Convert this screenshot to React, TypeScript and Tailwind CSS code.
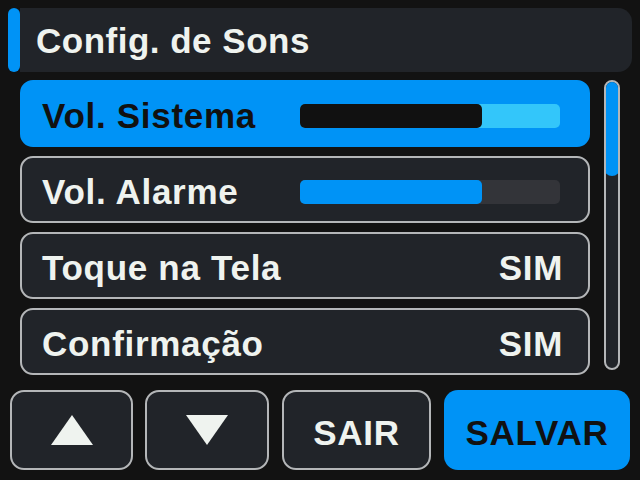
const font = { fontFamily: '"Liberation Sans", Arial, sans-serif' };

function Slider({ pct, fill, track }: { pct: number; fill: string; track: string }) {
  return (
    <div className={`w-[260px] h-[24px] rounded-[5px] overflow-hidden ${track}`}>
      <div className={`h-full rounded-r-[5px] ${fill}`} style={{ width: `${pct}%` }} />
    </div>
  );
}

function Row({ label, active, pr, children }: { label: string; active?: boolean; pr: string; children?: React.ReactNode }) {
  return (
    <div
      className={`h-[67px] rounded-[13px] flex items-center justify-between pl-[20px] pt-[4px] ${pr} ${
        active ? "bg-[#0093f6] text-[#111111] border-2 border-[#0093f6]" : "bg-[#212429] text-[#eff3ef] border-2 border-[#b4b6b8]"
      }`}
    >
      <span className="font-bold text-[35px] leading-none tracking-[0.7px]">{label}</span>
      {children}
    </div>
  );
}

export default function App() {
  return (
    <div className="w-[640px] h-[480px] bg-[#121212] flex flex-col overflow-hidden" style={font}>
      {/* header */}
      <div className="flex mx-2 mt-2 h-16">
        <div className="w-3 rounded-full bg-[#0093f6]" />
        <div className="flex-1 bg-[#212429] rounded-r-[14px] flex items-center pl-[16px]">
          <span className="font-bold text-[35px] leading-none tracking-[0.5px] text-[#eff3ef]">Config. de Sons</span>
        </div>
      </div>

      {/* list + scrollbar */}
      <div className="flex mt-2 ml-5">
        <div className="w-[570px] flex flex-col gap-[9px]">
          <Row label="Vol. Sistema" active pr="pr-[28px]">
            <Slider pct={70} fill="bg-[#111111]" track="bg-[#33c6fa]" />
          </Row>
          <Row label="Vol. Alarme" pr="pr-[28px]">
            <Slider pct={70} fill="bg-[#0093f6]" track="bg-[#333439]" />
          </Row>
          <Row label="Toque na Tela" pr="pr-[25px]">
            <span className="font-bold text-[35px] leading-none tracking-[0.7px]">SIM</span>
          </Row>
          <Row label="Confirmação" pr="pr-[25px]">
            <span className="font-bold text-[35px] leading-none tracking-[0.7px]">SIM</span>
          </Row>
        </div>
        <div className="ml-[14px] w-4 h-[290px] rounded-full border-2 border-[#b4b6b8] bg-[#212429] relative overflow-hidden">
          <div className="absolute -left-[2px] -right-[2px] -top-[2px] h-[96px] rounded-full bg-[#0093f6]" />
        </div>
      </div>

      {/* buttons */}
      <div className="flex mt-[15px] ml-[10px] gap-[13px]">
        <button className="w-[123px] h-20 rounded-[14px] border-2 border-[#b4b6b8] bg-[#212429] flex items-center justify-center">
          <svg width="42" height="30" viewBox="0 0 42 30">
            <polygon points="21,0 42,30 0,30" fill="#eff3ef" />
          </svg>
        </button>
        <button className="w-[124px] h-20 rounded-[14px] border-2 border-[#b4b6b8] bg-[#212429] flex items-center justify-center -ml-px">
          <svg width="42" height="30" viewBox="0 0 42 30">
            <polygon points="0,0 42,0 21,30" fill="#eff3ef" />
          </svg>
        </button>
        <button className="w-[149px] h-20 rounded-[14px] border-2 border-[#b4b6b8] bg-[#212429] flex items-center justify-center pt-[4px]">
          <span className="font-bold text-[35px] leading-none tracking-[0.7px] text-[#eff3ef]">SAIR</span>
        </button>
        <button className="w-[186px] h-20 rounded-[14px] bg-[#0093f6] flex items-center justify-center pt-[4px]">
          <span className="font-bold text-[35px] leading-none tracking-[0.7px] text-[#111111]">SALVAR</span>
        </button>
      </div>
    </div>
  );
}
